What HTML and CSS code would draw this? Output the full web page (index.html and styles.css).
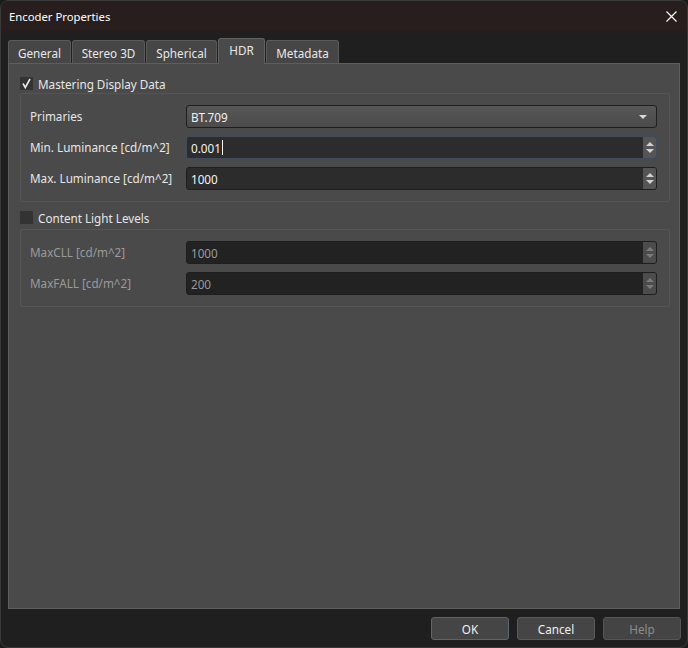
FILE: index.html
```html
<!DOCTYPE html>
<html lang="en">
<head>
    <meta charset="UTF-8">
    <title>Encoder Properties</title>
    <link rel="stylesheet" href="styles.css">
</head>
<body>
    <div class="window">
        <div class="titlebar">
            <span class="title">Encoder Properties</span>
            <svg class="close" viewBox="0 0 11 11" xmlns="http://www.w3.org/2000/svg">
                <path d="M0.5 0.5L10.5 10.5M10.5 0.5L0.5 10.5"></path>
            </svg>
        </div>
        <div class="content">
            <div class="tabbar">
                <div class="tab tab-general">General</div>
                <div class="tab tab-stereo">Stereo 3D</div>
                <div class="tab tab-spherical">Spherical</div>
                <div class="tab tab-hdr active">HDR</div>
                <div class="tab tab-meta">Metadata</div>
            </div>
            <div class="pane">
                <div class="check-row">
                    <span class="checkbox checked">
                        <svg viewBox="0 0 13 13" xmlns="http://www.w3.org/2000/svg">
                            <path d="M3 6.5L5.3 10.5L10 2"></path>
                        </svg>
                    </span>
                    <span>Mastering Display Data</span>
                </div>
                <div class="group">
                    <div class="field-label">Primaries</div>
                    <div class="combo">
                        <span>BT.709</span>
                        <span class="combo-arrow"></span>
                    </div>
                    <div class="field-label">Min. Luminance [cd/m^2]</div>
                    <div class="spin focused">
                        <span class="spin-value">0.001<span class="caret"></span></span>
                        <span class="spin-buttons"><i class="up"></i><i class="down"></i></span>
                    </div>
                    <div class="field-label">Max. Luminance [cd/m^2]</div>
                    <div class="spin">
                        <span class="spin-value">1000</span>
                        <span class="spin-buttons"><i class="up"></i><i class="down"></i></span>
                    </div>
                </div>

                <div class="check-row second">
                    <span class="checkbox"></span>
                    <span>Content Light Levels</span>
                </div>
                <div class="group disabled">
                    <div class="field-label">MaxCLL [cd/m^2]</div>
                    <div class="spin">
                        <span class="spin-value">1000</span>
                        <span class="spin-buttons"><i class="up"></i><i class="down"></i></span>
                    </div>
                    <div class="field-label">MaxFALL [cd/m^2]</div>
                    <div class="spin">
                        <span class="spin-value">200</span>
                        <span class="spin-buttons"><i class="up"></i><i class="down"></i></span>
                    </div>
                </div>
            </div>
            <div class="buttons">
                <button class="btn default">OK</button>
                <button class="btn">Cancel</button>
                <button class="btn" disabled>Help</button>
            </div>
        </div>
    </div>
</body>
</html>
```

FILE: styles.css
```css
* {
    margin: 0;
    padding: 0;
    box-sizing: border-box;
    font-family: 'Noto Sans', 'Open Sans', sans-serif;
}

body {
    background-color: #1b1b1b;
    width: 688px;
    height: 648px;
    overflow: hidden;
    font-size: 11.7px;
    color: #e6e6e6;
}

.window {
    width: 688px;
    height: 648px;
    border: 1px solid #3a3a3a;
    border-radius: 8px;
    background-color: #1f1f1f;
    overflow: hidden;
    display: flex;
    flex-direction: column;
}

.titlebar {
    height: 30px;
    flex-shrink: 0;
    background-color: #271e1d;
    display: flex;
    align-items: center;
    justify-content: space-between;
    padding: 0 10px 0 8px;
    color: #ffffff;
}

.title {
    font-size: 11.3px;
}

.close {
    width: 11px;
    height: 11px;
}

.close path {
    stroke: #ffffff;
    stroke-width: 1.1;
    fill: none;
}

.content {
    flex: 1;
    padding: 7px 6px 0 7px;
    display: flex;
    flex-direction: column;
}

/* Tabs */
.tabbar {
    display: flex;
    height: 25px;
    align-items: flex-end;
}

.tab {
    height: 23px;
    margin-right: 1px;
    background-color: #464646;
    border: 1px solid #5a5a5a;
    border-bottom: none;
    border-radius: 3px 3px 0 0;
    display: flex;
    align-items: center;
    justify-content: center;
    color: #e8e8e8;
    padding-top: 1px;
}

.tab-general { width: 63px; }
.tab-stereo { width: 73px; }
.tab-spherical { width: 71px; }
.tab-hdr { width: 47px; }
.tab-meta { width: 73px; }

.tab.active {
    height: 26px;
    background-color: #4a4a4a;
    border-color: #626262;
    margin-bottom: -1px;
    position: relative;
    z-index: 1;
    padding-top: 0;
    padding-bottom: 3px;
}

.pane {
    height: 546px;
    background-color: #4a4a4a;
    border: 1px solid #5e5e5e;
    padding: 13px 9px 0 11px;
    margin-right: 1px;
}

.check-row {
    display: flex;
    align-items: center;
    gap: 5px;
    height: 13px;
    margin-bottom: 3px;
}

.check-row.second {
    margin-top: 9px;
    margin-bottom: 5px;
}

.checkbox {
    width: 13px;
    height: 13px;
    background-color: #333333;
    display: flex;
}

.checkbox svg {
    width: 13px;
    height: 13px;
}

.checkbox path {
    stroke: #e8e8e8;
    stroke-width: 1.6;
    fill: none;
}

.group {
    border: 1px solid #555555;
    border-radius: 2px;
    padding: 11px 12px 11px 9px;
    display: grid;
    grid-template-columns: 156px 1fr;
    grid-auto-rows: 23px;
    row-gap: 8px;
    align-items: center;
}

.group.disabled {
    color: #9a9a9a;
}

.field-label {
    line-height: 23px;
}

.combo {
    height: 23px;
    border: 1px solid #1e1e1e;
    border-radius: 3px;
    background: linear-gradient(#575757, #4b4b4b);
    display: flex;
    align-items: center;
    justify-content: space-between;
    padding: 0 9px 0 4px;
    color: #f0f0f0;
}

.combo-arrow {
    width: 0;
    height: 0;
    border-left: 4px solid transparent;
    border-right: 4px solid transparent;
    border-top: 4px solid #d8d8d8;
}

.spin {
    height: 23px;
    border: 1px solid #1e1e1e;
    border-radius: 3px;
    background-color: #2c2c2c;
    display: flex;
    align-items: stretch;
    overflow: hidden;
}

.spin.focused {
    border-color: #3f4c5c;
}

.spin-value {
    flex: 1;
    display: flex;
    align-items: center;
    padding-left: 4px;
    color: #f4f4f4;
}

.caret {
    width: 1px;
    height: 15px;
    background-color: #f4f4f4;
    margin-left: 1px;
}

.spin-buttons {
    width: 13px;
    background-color: #555555;
    display: flex;
    flex-direction: column;
    align-items: center;
    justify-content: center;
    gap: 3px;
}

.spin-buttons i {
    width: 0;
    height: 0;
    border-left: 4px solid transparent;
    border-right: 4px solid transparent;
}

.spin-buttons .up {
    border-bottom: 4px solid #d0d0d0;
}

.spin-buttons .down {
    border-top: 4px solid #d0d0d0;
}

.disabled .spin {
    background-color: #222222;
}

.disabled .spin-value {
    color: #9a9a9a;
}

.disabled .spin-buttons {
    background-color: #4c4c4c;
}

.disabled .spin-buttons .up {
    border-bottom-color: #7a7a7a;
}

.disabled .spin-buttons .down {
    border-top-color: #7a7a7a;
}

/* Dialog buttons */
.buttons {
    display: flex;
    justify-content: flex-end;
    gap: 8px;
    margin-top: 8px;
}

.btn {
    width: 78px;
    height: 23px;
    background-color: #454545;
    border: 1px solid #5a5a5a;
    border-radius: 3px;
    color: #f0f0f0;
    font-size: 11.7px;
}

.btn.default {
    border-color: #5b6470;
}

.btn:disabled {
    color: #8c8c8c;
    background-color: #444444;
    border-color: #555555;
}
```
